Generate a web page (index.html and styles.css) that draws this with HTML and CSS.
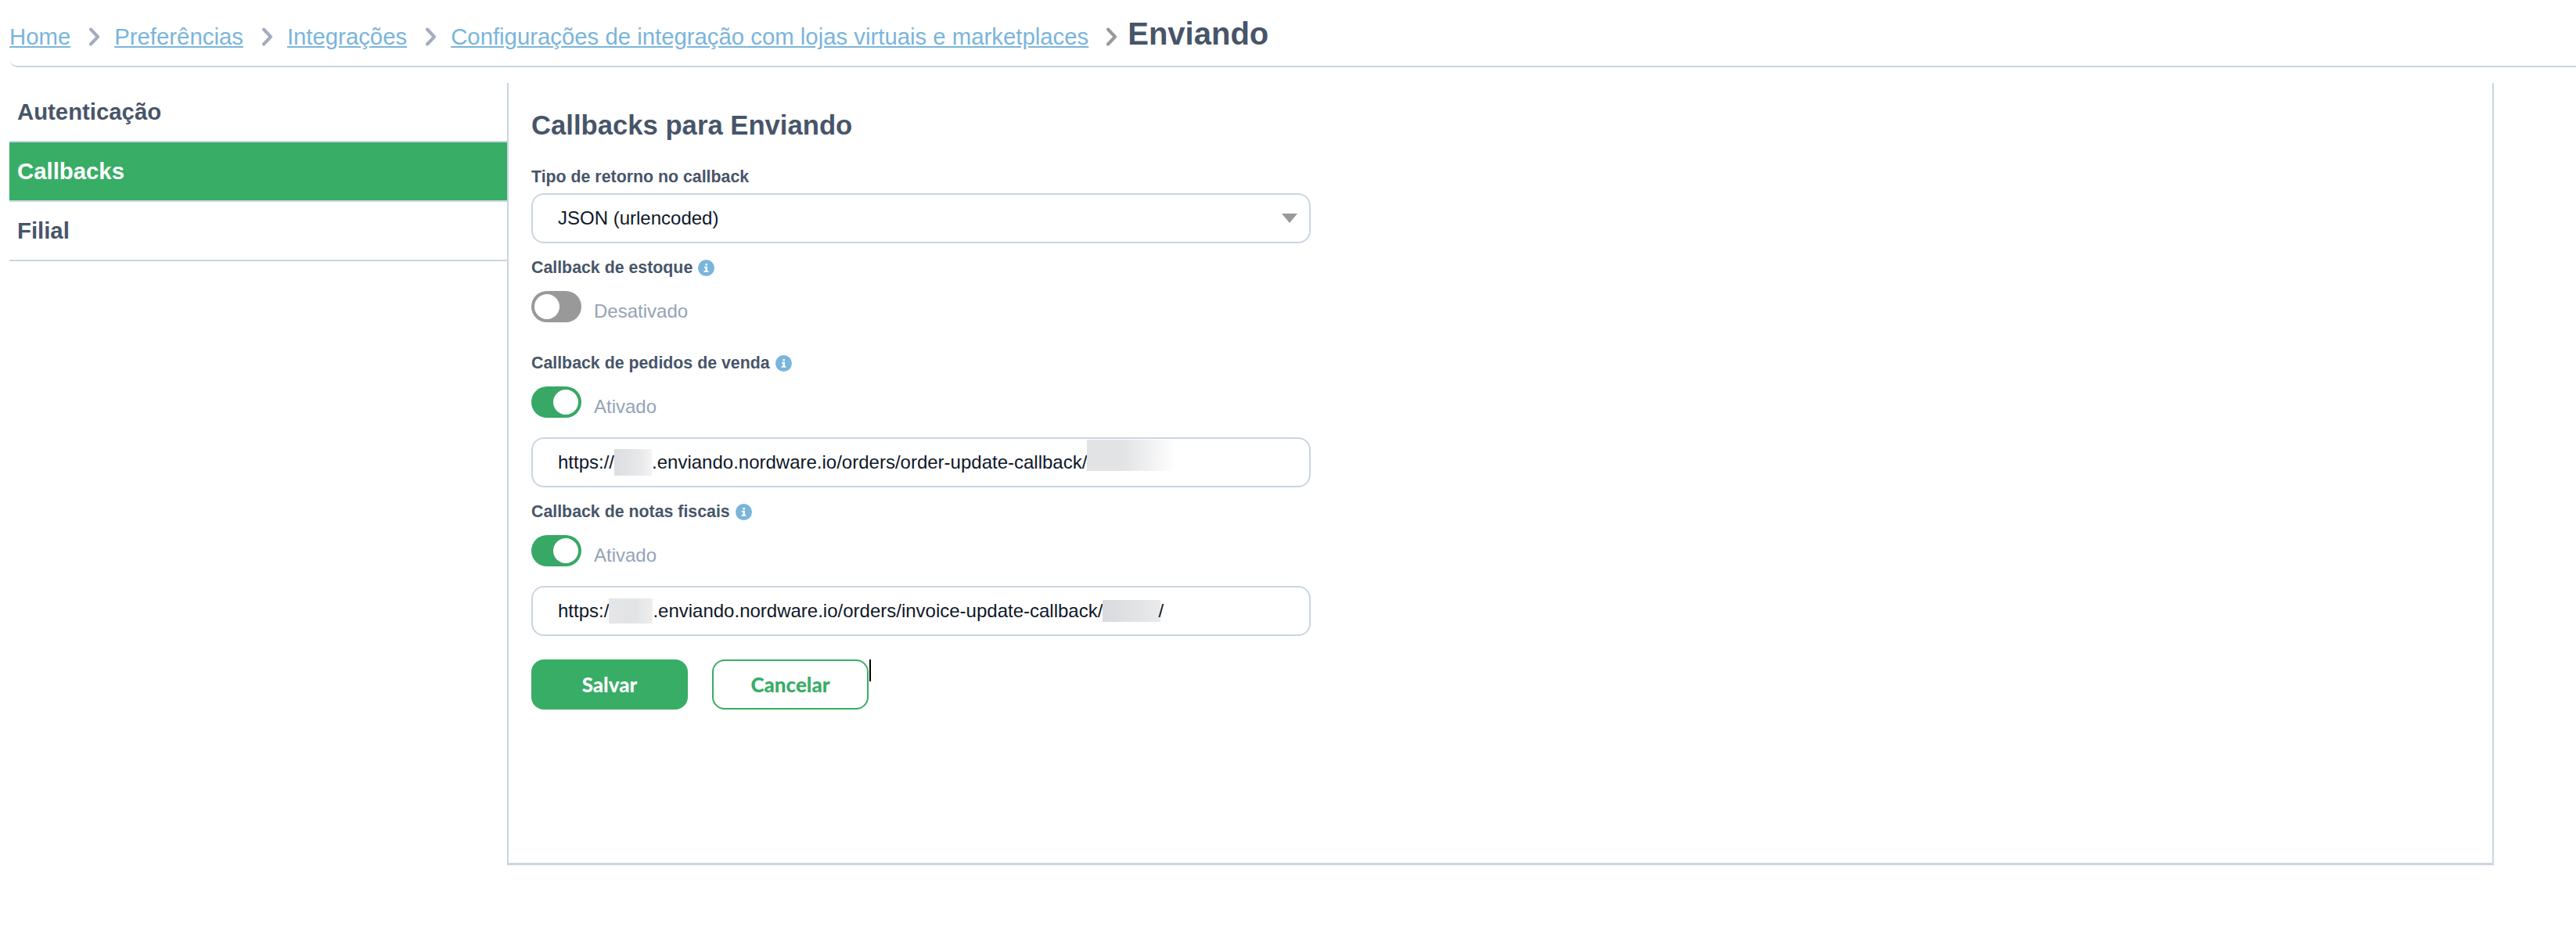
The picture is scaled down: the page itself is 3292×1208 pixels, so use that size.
FILE: index.html
```html
<!DOCTYPE html>
<html lang="en">
<head>
    <meta charset="UTF-8">
    <title>Callbacks para Enviando</title>
    <link rel="stylesheet" href="styles.css">
</head>
<body>
    <nav class="breadcrumb">
        <a href="#">Home</a>
        <svg class="chevron" viewBox="0 0 15 24"><path d="M3 2.5l9 9.5-9 9.5"/></svg>
        <a href="#">Preferências</a>
        <svg class="chevron" viewBox="0 0 15 24"><path d="M3 2.5l9 9.5-9 9.5"/></svg>
        <a href="#">Integrações</a>
        <svg class="chevron" viewBox="0 0 15 24"><path d="M3 2.5l9 9.5-9 9.5"/></svg>
        <a href="#">Configurações de integração com lojas virtuais e marketplaces</a>
        <svg class="chevron chevron-last" viewBox="0 0 15 24"><path d="M3 2.5l9 9.5-9 9.5"/></svg>
        <span class="current">Enviando</span>
    </nav>

    <div class="layout">
        <aside class="sidebar">
            <div class="side-item">Autenticação</div>
            <div class="side-item active">Callbacks</div>
            <div class="side-item">Filial</div>
        </aside>

        <main class="panel">
            <h2>Callbacks para Enviando</h2>

            <div class="field-label first">Tipo de retorno no callback</div>
            <div class="select-box">
                <span>JSON (urlencoded)</span>
                <svg class="caret" viewBox="0 0 20 12"><path d="M0 0h20l-10 12z"/></svg>
            </div>

            <div class="field-label">
                Callback de estoque
                <svg class="info" viewBox="0 0 20 20"><circle cx="10" cy="10" r="10"/><rect x="7.5" y="8.5" width="4" height="1.6"/><rect x="9" y="8.5" width="2.4" height="6"/><rect x="7.2" y="13.4" width="5.6" height="1.6"/><rect x="9" y="4.8" width="2.4" height="2.4"/></svg>
            </div>
            <div class="toggle-row">
                <span class="toggle"><span class="knob"></span></span>
                <span class="toggle-text">Desativado</span>
            </div>

            <div class="field-label after-off">
                Callback de pedidos de venda
                <svg class="info" viewBox="0 0 20 20"><circle cx="10" cy="10" r="10"/><rect x="7.5" y="8.5" width="4" height="1.6"/><rect x="9" y="8.5" width="2.4" height="6"/><rect x="7.2" y="13.4" width="5.6" height="1.6"/><rect x="9" y="4.8" width="2.4" height="2.4"/></svg>
            </div>
            <div class="toggle-row">
                <span class="toggle on"><span class="knob"></span></span>
                <span class="toggle-text">Ativado</span>
            </div>
            <div class="url-box">https://<span class="redact r1"></span>.enviando.nordware.io/orders/order-update-callback/<span class="redact r2"></span></div>

            <div class="field-label">
                Callback de notas fiscais
                <svg class="info" viewBox="0 0 20 20"><circle cx="10" cy="10" r="10"/><rect x="7.5" y="8.5" width="4" height="1.6"/><rect x="9" y="8.5" width="2.4" height="6"/><rect x="7.2" y="13.4" width="5.6" height="1.6"/><rect x="9" y="4.8" width="2.4" height="2.4"/></svg>
            </div>
            <div class="toggle-row">
                <span class="toggle on"><span class="knob"></span></span>
                <span class="toggle-text">Ativado</span>
            </div>
            <div class="url-box">https:/<span class="redact r3"></span>.enviando.nordware.io/orders/invoice-update-callback/<span class="redact r4"></span>/</div>

            <div class="actions">
                <button class="btn btn-save">Salvar</button>
                <button class="btn btn-cancel">Cancelar<span class="text-cursor"></span></button>
            </div>
        </main>
    </div>
</body>
</html>
```

FILE: styles.css
```css
body {
    background-color: #fff;
    color: #475569;
    font-family: "Liberation Sans", Arial, sans-serif;
    margin: 0;
    padding: 0;
}

/* Breadcrumb */
.breadcrumb {
    display: flex;
    align-items: center;
    height: 84px;
    margin-left: 12px;
    border-bottom: 2px solid #cbd5e1;
    border-bottom-left-radius: 10px;
}
.breadcrumb a {
    font-size: 29.33px;
    color: #7ab5dc;
    text-decoration: underline;
    margin-top: 10px;
}
.chevron {
    width: 15px;
    height: 24px;
    margin: 9px 18px 0 23px;
    fill: none;
    stroke: #a3adbd;
    stroke-width: 4;
    stroke-linecap: round;
    stroke-linejoin: round;
}
.chevron-last {
    margin: 9px 13px 0 22px;
    stroke: #999;
}
.current {
    font-size: 40px;
    font-weight: bold;
    margin-top: 2px;
}

/* Layout */
.layout {
    display: flex;
    margin: 20px 105px 0 12px;
}
.sidebar {
    width: 636px;
    flex-shrink: 0;
}
.side-item {
    height: 74px;
    line-height: 74px;
    padding-left: 10px;
    font-size: 29.33px;
    font-weight: bold;
    border-bottom: 2px solid #cbd5e1;
}
.side-item.active {
    background-color: #38ad66;
    color: #fff;
}

/* Panel */
.panel {
    flex: 1;
    height: 997px;
    padding: 0 29px;
    border-left: 2px solid #cbd5e1;
    border-right: 2px solid #cbd5e1;
    border-bottom: 3px solid #cbd5e1;
}
.panel h2 {
    font-size: 34.67px;
    line-height: 40px;
    font-weight: bold;
    margin: 34px 0 0;
}
.field-label {
    display: flex;
    align-items: center;
    gap: 7px;
    font-size: 21.33px;
    line-height: 25px;
    font-weight: bold;
    margin-top: 19px;
}
.field-label.first {
    margin-top: 34px;
    margin-bottom: 8px;
}
.field-label.after-off {
    margin-top: 40px;
}
.info {
    width: 21px;
    height: 21px;
    fill: #fff;
}
.info circle {
    fill: #7ab5dc;
}

.select-box,
.url-box {
    width: 996px;
    height: 64px;
    box-sizing: border-box;
    display: flex;
    align-items: center;
    padding: 0 32px;
    border: 2px solid #cbd5e1;
    border-radius: 16px;
    font-size: 24px;
    color: #0f172a;
}
.select-box {
    justify-content: space-between;
    padding-right: 15px;
}
.caret {
    width: 20px;
    height: 12px;
    fill: #999;
}

.toggle-row {
    display: flex;
    align-items: center;
    gap: 16px;
    margin-top: 17px;
}
.toggle {
    display: flex;
    align-items: center;
    width: 64px;
    height: 40px;
    box-sizing: border-box;
    padding: 0 4px;
    border-radius: 20px;
    background-color: #999;
}
.toggle.on {
    background-color: #38a866;
    justify-content: flex-end;
}
.knob {
    width: 32px;
    height: 32px;
    border-radius: 50%;
    background-color: #fff;
}
.toggle-text {
    font-size: 24px;
    color: #94a3b8;
    margin-top: 11px;
}
.toggle-row + .url-box {
    margin-top: 25px;
}

/* Blurred out parts of the urls */
.redact {
    flex-shrink: 0;
}
.r1 {
    width: 48px;
    height: 34px;
    background: linear-gradient(90deg, #dcdde0, #e8e9ea 70%, #f4f4f5);
}
.r2 {
    width: 114px;
    height: 40px;
    align-self: flex-start;
    margin-top: 1px;
    background: linear-gradient(90deg, #e2e3e5 40%, #fff);
}
.r3 {
    width: 56px;
    height: 32px;
    background: linear-gradient(90deg, #e6e6e8, #e2e3e5 60%, #eeeeef);
}
.r4 {
    width: 74px;
    height: 28px;
    margin-right: -3px;
    background: linear-gradient(90deg, #d9dadd, #e9eaeb);
}

.actions {
    display: flex;
    gap: 31px;
    margin-top: 30px;
}
.btn {
    position: relative;
    width: 200px;
    height: 64px;
    border-radius: 16px;
    font-family: Lato, sans-serif;
    font-size: 26px;
    font-weight: 900;
}
.btn-save {
    background-color: #38ad66;
    border: none;
    color: #fff;
}
.btn-cancel {
    background-color: #fff;
    border: 2px solid #38ad66;
    color: #38ad66;
}
.text-cursor {
    position: absolute;
    top: -2px;
    right: -5px;
    width: 2px;
    height: 28px;
    background-color: #000;
}
```
